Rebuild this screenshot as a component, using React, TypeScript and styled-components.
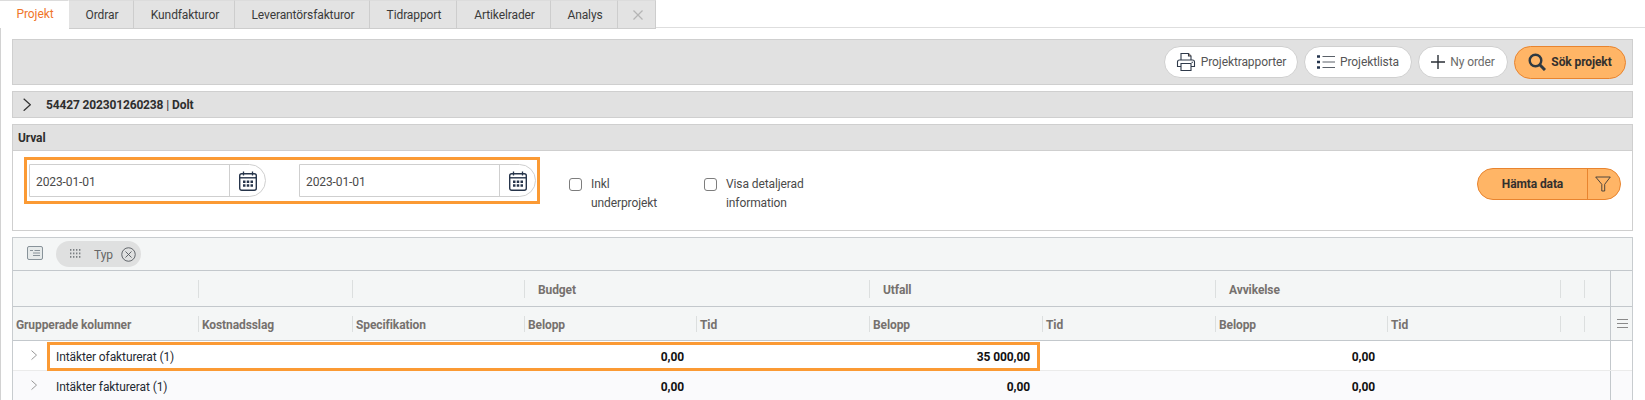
import styled, { createGlobalStyle } from 'styled-components'

const GlobalStyle = createGlobalStyle`
  html, body {
    margin: 0;
    padding: 0;
    height: 400px;
    overflow: hidden;
    background: #fff;
    font-family: Roboto, "Liberation Sans", sans-serif;
    font-size: 12px;
  }
`

const COLUMNS = '185px 154px 172px 172px 173px 173px 173px 172px 173px 24px 26px 23px'

const tabs = [
  { label: 'Projekt', width: 69 },
  { label: 'Ordrar', width: 65 },
  { label: 'Kundfakturor', width: 101 },
  { label: 'Leverantörsfakturor', width: 135 },
  { label: 'Tidrapport', width: 87 },
  { label: 'Artikelrader', width: 94 },
  { label: 'Analys', width: 67 },
]

const subHeaders = ['Grupperade kolumner', 'Kostnadsslag', 'Specifikation', 'Belopp', 'Tid', 'Belopp', 'Tid', 'Belopp', 'Tid', '', '']

const PrinterIcon = () => (
  <svg width="20" height="20" viewBox="0 0 20 20" fill="none" stroke="#2f3a4a" strokeWidth="1.1">
    <path d="M5 8V1.5h7.5L15 4v4" />
    <path d="M12.5 1.5V4H15" fill="#f0b27a" />
    <path d="M5 14.5H1.5V10q0-2 2-2h13q2 0 2 2v4.500H15" />
    <path d="M5 11.500h10v7H5z" />
    <path d="M15.500 10.300h1.500" />
  </svg>
)

const ListIcon = () => (
  <svg width="18" height="14" viewBox="0 0 18 14" fill="none">
    <path d="M0 1.500h3M0 7h3M0 12.500h3" stroke="#24344d" strokeWidth="2.400" />
    <path d="M5.500 1.500H18M5.500 7H18M5.500 12.500H18" stroke="#5a6068" strokeWidth="1" />
  </svg>
)

const PlusIcon = () => (
  <svg width="14" height="14" viewBox="0 0 14 14" stroke="#2a2f36" strokeWidth="1.400">
    <path d="M7 0v14M0 7h14" />
  </svg>
)

const SearchIcon = () => (
  <svg width="18" height="18" viewBox="0 0 18 18" fill="none" stroke="#2f3a42" strokeWidth="2.400">
    <circle cx="7.500" cy="7.500" r="5.800" />
    <path d="M11.800 11.800L17 17" strokeWidth="3" />
  </svg>
)

const CalendarIcon = () => (
  <svg width="18" height="20" viewBox="0 0 18 20" fill="none">
    <path d="M4.500 0.500v4M13.500 0.500v4" stroke="#26344a" strokeWidth="1.300" />
    <rect x="0.700" y="2.800" width="16.600" height="16.500" rx="2" stroke="#26344a" strokeWidth="1.400" />
    <path d="M1 6.800h16" stroke="#26344a" strokeWidth="1.400" />
    <path d="M4 9.500h2.500v2.500H4zM7.750 9.500h2.500v2.500h-2.500zM11.500 9.500H14v2.500h-2.500zM4 13.200h2.500v2.500H4zM7.750 13.200h2.500v2.500h-2.500zM11.500 13.200H14v2.500h-2.500z" fill="#26344a" />
  </svg>
)

const FilterIcon = () => (
  <svg width="16" height="16" viewBox="0 0 16 16" fill="none" stroke="#3c3a38" strokeWidth="0.900">
    <path d="M0.700 1h14.600L9.700 8.300v6.700H6.800V8.300z" />
  </svg>
)

const ChevronIcon = ({ size = 6, color = '#8d8d8d' }: { size?: number; color?: string }) => (
  <svg width={size} height={size * 1.700} viewBox="0 0 6 10" fill="none" stroke={color} strokeWidth="0.900">
    <path d="M0.500 0.500L5.500 5L0.500 9.500" />
  </svg>
)

const GroupPanelIcon = () => (
  <svg width="16" height="14" viewBox="0 0 16 14" fill="#e6eaea" stroke="#7d8890" strokeWidth="0.900">
    <rect x="0.500" y="0.500" width="15" height="13" rx="1.500" />
    <path d="M3 4.500h3M7.500 4.500h5.500M6 7h7M6 9.500h7" strokeWidth="0.900" />
  </svg>
)

const DotsIcon = () => (
  <svg width="12" height="10" viewBox="0 0 12 10" fill="#7a7f83">
    {[0, 3.500, 7].map((y) =>
      [0, 3, 6, 9].map((x) => <rect key={`${x}-${y}`} x={x} y={y} width="1.400" height="1.800" />),
    )}
  </svg>
)

const RemoveIcon = () => (
  <svg width="15" height="15" viewBox="0 0 14 14" fill="none" stroke="#4c5157" strokeWidth="0.800">
    <circle cx="7" cy="7" r="6.300" />
    <path d="M4.200 4.200l5.600 5.600M9.800 4.200l-5.600 5.600" />
  </svg>
)

const CloseGlyph = () => (
  <svg width="10" height="10" viewBox="0 0 10 10" stroke="#b5b5b5" strokeWidth="1.300">
    <path d="M0.500 0.500l9 9M9.500 0.500l-9 9" />
  </svg>
)

const DateField = () => (
  <DateBox>
    <DateValue>2023-01-01</DateValue>
    <CalendarButton>
      <CalendarIcon />
    </CalendarButton>
  </DateBox>
)

const App = () => {
  return (
    <Page>
      <GlobalStyle />
      <TabBar>
        {tabs.map((tab, i) => (
          <Tab key={tab.label} $active={i === 0} $width={tab.width}>
            {tab.label}
          </Tab>
        ))}
        <Tab $width={38}>
          <CloseGlyph />
        </Tab>
      </TabBar>
      <Content>
        <Toolbar>
          <PillButton $width={134}>
            <PrinterIcon />
            Projektrapporter
          </PillButton>
          <PillButton $width={108}>
            <ListIcon />
            Projektlista
          </PillButton>
          <PillButton $width={90}>
            <PlusIcon />
            <MutedLabel>Ny order</MutedLabel>
          </PillButton>
          <SearchButton>
            <SearchIcon />
            Sök projekt
          </SearchButton>
        </Toolbar>
        <SectionBar>
          <ChevronIcon size={8} color="#333" />
          <strong>54427 202301260238</strong>
          <Thin>|</Thin>
          <strong>Dolt</strong>
        </SectionBar>
        <FilterPanel>
          <FilterTitle>Urval</FilterTitle>
          <FilterBody>
            <DateHighlight>
              <DateField />
              <DateField />
            </DateHighlight>
            <CheckOption $width={135}>
              <CheckBox />
              <span>
                Inkl
                <br />
                underprojekt
              </span>
            </CheckOption>
            <CheckOption $width={150}>
              <CheckBox />
              <span>
                Visa detaljerad
                <br />
                information
              </span>
            </CheckOption>
            <FetchButton>
              <FetchLabel>Hämta data</FetchLabel>
              <FetchFilter>
                <FilterIcon />
              </FetchFilter>
            </FetchButton>
          </FilterBody>
        </FilterPanel>
        <GridPanel>
          <GroupBar>
            <GroupPanelIcon />
            <GroupChip>
              <DotsIcon />
              <ChipLabel>Typ</ChipLabel>
              <RemoveIcon />
            </GroupChip>
          </GroupBar>
          <GroupHeaderRow>
            <HeaderCell />
            <HeaderCell $sep />
            <HeaderCell $sep />
            <HeaderCell $sep $span={2} $group>Budget</HeaderCell>
            <HeaderCell $sep $span={2} $group>Utfall</HeaderCell>
            <HeaderCell $sep $span={2} $group>Avvikelse</HeaderCell>
            <HeaderCell $sep />
            <HeaderCell $sep />
            <PinnedCell />
          </GroupHeaderRow>
          <SubHeaderRow>
            {subHeaders.map((label, i) => (
              <HeaderCell key={i} $sep={i > 0} $first={i === 0}>
                {label}
              </HeaderCell>
            ))}
            <PinnedCell>
              <MenuLines />
            </PinnedCell>
          </SubHeaderRow>
          <DataRow>
            <NameCell>
              <ChevronIcon />
              <span>Intäkter ofakturerat (1)</span>
            </NameCell>
            <span />
            <span />
            <AmountCell>0,00</AmountCell>
            <span />
            <AmountCell>35 000,00</AmountCell>
            <span />
            <AmountCell>0,00</AmountCell>
            <span />
            <span />
            <span />
            <PinnedCell />
            <RowHighlight />
          </DataRow>
          <DataRow $alt>
            <NameCell>
              <ChevronIcon />
              <span>Intäkter fakturerat (1)</span>
            </NameCell>
            <span />
            <span />
            <AmountCell>0,00</AmountCell>
            <span />
            <AmountCell>0,00</AmountCell>
            <span />
            <AmountCell>0,00</AmountCell>
            <span />
            <span />
            <span />
            <PinnedCell />
          </DataRow>
        </GridPanel>
      </Content>
    </Page>
  )
}

export default App

const Page = styled.div`
  width: 1645px;
  height: 400px;
  overflow: hidden;
  color: #3a3a3a;
  letter-spacing: -0.1px;
`

const TabBar = styled.div`
  display: flex;
  height: 28px;
  box-sizing: border-box;
  border-bottom: 1px solid #dedede;
`

const Tab = styled.div<{ $active?: boolean; $width: number }>`
  display: flex;
  align-items: center;
  justify-content: center;
  box-sizing: border-box;
  width: ${(p) => p.$width}px;
  height: ${(p) => (p.$active ? 28 : 29)}px;
  padding-left: 2px;
  background: ${(p) => (p.$active ? '#fff' : '#e3e3e3')};
  border: 1px solid ${(p) => (p.$active ? '#fff' : '#cdcdcd')};
  border-left: none;
  border-top-color: #dcdcdc;
  border-bottom-width: 1px;
  color: ${(p) => (p.$active ? '#f0762a' : '#3a3a3a')};
  font-size: 12px;
`

const Content = styled.div`
  display: flex;
  flex-direction: column;
  gap: 6px;
  height: 372px;
  box-sizing: border-box;
  padding: 11px 12px 0;
  border-left: 1px solid #d2d2d2;
`

const Toolbar = styled.div`
  display: flex;
  align-items: center;
  justify-content: flex-end;
  gap: 6px;
  height: 46px;
  flex: none;
  box-sizing: border-box;
  padding-right: 6px;
  margin-left: -1px;
  background: #e1e1e1;
  border: 1px solid #cfcfcf;
`

const PillButton = styled.div<{ $width: number }>`
  display: flex;
  align-items: center;
  justify-content: center;
  gap: 5px;
  box-sizing: border-box;
  width: ${(p) => p.$width}px;
  height: 32px;
  background: #fff;
  border: 1px solid #d0d0d0;
  border-radius: 16px;
  color: #555;
  font-size: 12px;
`

const MutedLabel = styled.span`
  color: #6a6a6a;
`

const SearchButton = styled.div`
  display: flex;
  align-items: center;
  justify-content: center;
  gap: 5px;
  box-sizing: border-box;
  width: 112px;
  height: 33px;
  background: #ffb566;
  border: 1px solid #e8842f;
  border-radius: 17px;
  color: #33302e;
  font-size: 12px;
  font-weight: 700;
`

const SectionBar = styled.div`
  display: flex;
  align-items: center;
  gap: 2px;
  height: 27px;
  flex: none;
  box-sizing: border-box;
  padding-left: 10px;
  margin-left: -1px;
  background: #e1e1e1;
  border: 1px solid #cfcfcf;
  color: #2e2e2e;
  font-size: 12px;
  letter-spacing: -0.15px;

  svg {
    margin-right: 13px;
  }
`

const Thin = styled.span`
  font-weight: 400;
  margin: 0 1px;
`

const FilterPanel = styled.div`
  display: flex;
  flex-direction: column;
  height: 107px;
  flex: none;
  box-sizing: border-box;
  margin-left: -1px;
  border: 1px solid #cfcfcf;
  border-top: none;
`

const FilterTitle = styled.div`
  display: flex;
  align-items: center;
  height: 27px;
  flex: none;
  box-sizing: border-box;
  padding-left: 5px;
  background: #e1e1e1;
  border-top: 1px solid #cfcfcf;
  border-bottom: 1px solid #cfcfcf;
  color: #2e2e2e;
  font-size: 12px;
  font-weight: 700;
`

const FilterBody = styled.div`
  display: flex;
  align-items: flex-start;
  padding: 6px 11px 0;
`

const DateHighlight = styled.div`
  display: flex;
  gap: 33px;
  box-sizing: border-box;
  width: 516px;
  height: 47px;
  padding: 4px 2px;
  margin-right: 29px;
  border: 3px solid #fb9a34;
`

const DateBox = styled.div`
  display: flex;
  width: 237px;
  height: 33px;
  flex: none;
  box-sizing: border-box;
  background: #fff;
  border: 1px solid #cfcfcf;
  border-radius: 0 17px 17px 0;
`

const DateValue = styled.div`
  display: flex;
  align-items: center;
  width: 200px;
  box-sizing: border-box;
  padding: 2px 0 0 6px;
  border-right: 1px solid #cfcfcf;
  color: #4a4a4a;
  font-size: 12px;
`

const CalendarButton = styled.div`
  display: flex;
  align-items: center;
  justify-content: center;
  flex: 1;
`

const CheckOption = styled.div<{ $width: number }>`
  display: flex;
  gap: 9px;
  width: ${(p) => p.$width}px;
  flex: none;
  margin-top: 18px;
  color: #4a4a4a;
  font-size: 12px;
  line-height: 19px;
`

const CheckBox = styled.div`
  width: 13px;
  height: 13px;
  margin-top: 3px;
  flex: none;
  box-sizing: border-box;
  border: 1px solid #7d7d7d;
  border-radius: 3px;
`

const FetchButton = styled.div`
  display: flex;
  box-sizing: border-box;
  width: 144px;
  height: 32px;
  margin: 11px 0 0 auto;
  background: #ffb566;
  border: 1px solid #e8842f;
  border-radius: 16px;
`

const FetchLabel = styled.div`
  display: flex;
  align-items: center;
  justify-content: center;
  width: 109px;
  border-right: 1px solid #e8842f;
  color: #33302e;
  font-size: 12px;
  font-weight: 700;
`

const FetchFilter = styled.div`
  display: flex;
  align-items: center;
  justify-content: center;
  flex: 1;
  padding-right: 2px;
`

const GridPanel = styled.div`
  flex: none;
  margin-left: -1px;
  border: 1px solid #c8cccf;
  border-bottom: none;
`

const GroupBar = styled.div`
  display: flex;
  align-items: center;
  gap: 13px;
  height: 33px;
  box-sizing: border-box;
  padding-left: 14px;
  background: #f4f6f6;
  border-bottom: 1px solid #c3c8cc;

  > svg {
    margin-bottom: 2px;
  }
`

const GroupChip = styled.div`
  display: flex;
  align-items: center;
  box-sizing: border-box;
  width: 85px;
  height: 26px;
  padding-left: 14px;
  background: #dfe0e0;
  border-radius: 13px;
`

const ChipLabel = styled.span`
  margin: 2px 8px 0 12px;
  color: #666;
  font-size: 12px;
`

const GroupHeaderRow = styled.div`
  display: grid;
  grid-template-columns: ${COLUMNS};
  height: 36px;
  box-sizing: border-box;
  background: #f4f6f6;
  border-bottom: 1px solid #c3c8cc;
`

const SubHeaderRow = styled(GroupHeaderRow)`
  height: 34px;
`

const HeaderCell = styled.div<{ $sep?: boolean; $span?: number; $group?: boolean; $first?: boolean }>`
  position: relative;
  display: flex;
  align-items: center;
  grid-column: span ${(p) => p.$span ?? 1};
  padding-top: 2px;
  padding-left: ${(p) => (p.$group ? 14 : p.$first ? 3 : 4)}px;
  color: #76716e;
  font-size: 12px;
  font-weight: 700;
  white-space: nowrap;

  &::before {
    content: '';
    display: ${(p) => (p.$sep ? 'block' : 'none')};
    position: absolute;
    left: 0;
    top: 9px;
    bottom: 8px;
    width: 1px;
    background: #dcdfdf;
  }
`

const PinnedCell = styled.div`
  display: flex;
  align-items: center;
  justify-content: center;
  border-left: 1px solid #c3c8cc;
`

const MenuLines = styled.div`
  width: 11px;
  height: 7px;
  border-top: 1px solid #8a8a8a;
  border-bottom: 1px solid #8a8a8a;
  position: relative;

  &::after {
    content: '';
    position: absolute;
    left: 0;
    right: 0;
    top: 3px;
    height: 1px;
    background: #8a8a8a;
  }
`

const DataRow = styled.div<{ $alt?: boolean }>`
  position: relative;
  display: grid;
  grid-template-columns: ${COLUMNS};
  height: 30px;
  box-sizing: border-box;
  background: ${(p) => (p.$alt ? '#fafafc' : '#fff')};
  border-bottom: 1px solid #ebebeb;
`

const NameCell = styled.div`
  display: flex;
  align-items: center;
  gap: 19px;
  padding-left: 18px;
  color: #1f2a33;
  font-size: 12px;
  white-space: nowrap;

  span {
    padding-top: 2px;
  }
`

const AmountCell = styled.div`
  display: flex;
  align-items: center;
  justify-content: flex-end;
  padding: 2px 12px 0 0;
  color: #111;
  font-size: 12px;
  font-weight: 700;
`

const RowHighlight = styled.div`
  position: absolute;
  left: 34px;
  top: 1px;
  width: 993px;
  height: 29px;
  box-sizing: border-box;
  border: 3px solid #fb9a34;
  pointer-events: none;
`
